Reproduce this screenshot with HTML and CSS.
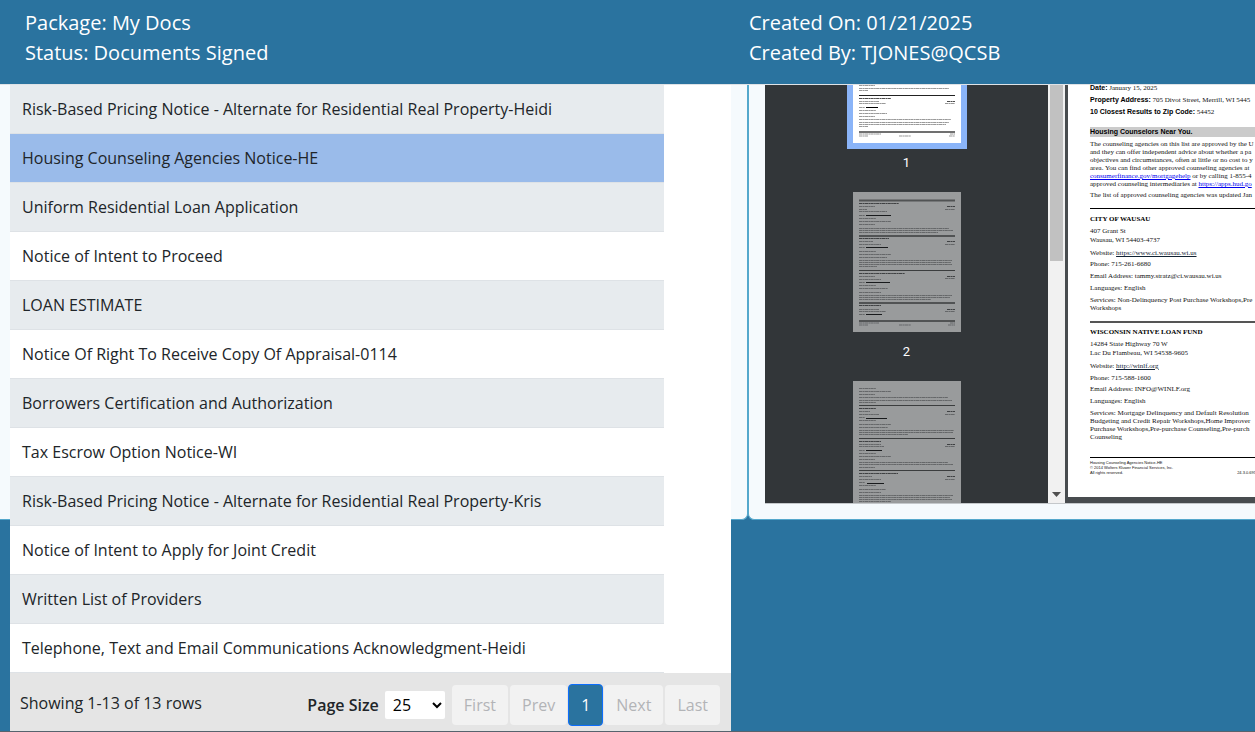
FILE: index.html
```html
<!DOCTYPE html>
<html lang="en">
<head>
<meta charset="utf-8">
<title>My Docs</title>
<link rel="stylesheet" href="styles.css">
</head>
<body>
<header class="summary">
  <div class="summary-col">
    <div>Package: My Docs</div>
    <div>Status: Documents Signed</div>
  </div>
  <div class="summary-col summary-col-created">
    <div>Created On: 01/21/2025</div>
    <div>Created By: TJONES@QCSB</div>
  </div>
</header>
<main class="panels">
  <section class="card card-list">
    <div class="doc-list">
      <div class="table-wrap">
        <table class="docs">
          <tbody>
            <tr><td>Risk-Based Pricing Notice - Alternate for Residential Real Property-Heidi</td></tr>
            <tr class="selected"><td>Housing Counseling Agencies Notice-HE</td></tr>
            <tr><td>Uniform Residential Loan Application</td></tr>
            <tr><td>Notice of Intent to Proceed</td></tr>
            <tr><td>LOAN ESTIMATE</td></tr>
            <tr><td>Notice Of Right To Receive Copy Of Appraisal-0114</td></tr>
            <tr><td>Borrowers Certification and Authorization</td></tr>
            <tr><td>Tax Escrow Option Notice-WI</td></tr>
            <tr><td>Risk-Based Pricing Notice - Alternate for Residential Real Property-Kris</td></tr>
            <tr><td>Notice of Intent to Apply for Joint Credit</td></tr>
            <tr><td>Written List of Providers</td></tr>
            <tr><td>Telephone, Text and Email Communications Acknowledgment-Heidi</td></tr>
          </tbody>
        </table>
      </div>
      <div class="pager">
        <span class="pager-info">Showing 1-13 of 13 rows</span>
        <label class="pager-label" for="page-size">Page Size</label>
        <select class="pager-size" id="page-size"><option>10</option><option selected>25</option><option>50</option></select>
        <nav class="pager-buttons" aria-label="Pages">
          <button type="button" disabled>First</button>
          <button type="button" disabled>Prev</button>
          <button type="button" class="current">1</button>
          <button type="button" disabled>Next</button>
          <button type="button" disabled>Last</button>
        </nav>
      </div>
    </div>
  </section>
  <section class="card card-viewer">
    <div class="viewer">
      <div class="thumbs">
        <div class="thumb active">
          <svg viewBox="0 0 108 140" width="108" height="140" aria-hidden="true">
            <path class="tx strong" d="M6 95.500H38M94 98.500H102"/>
            <path class="tx" d="M6 82.500H22M6 85.500H96M6 87.500H15M6 98.500H26M6 100.500H33M92 100.500H102M6 104.500H12M6 107.500H23M6 110.500H34M6 113.500H22M6 116.500H98M6 119.500H96M6 121.500H93M6 123.500H15"/>
            <path class="bar strong" d="M6 92.500H102"/>
            <path class="bar soft" d="M6 129H102"/>
            <path class="tx" d="M6 131H28M6 133H15M46 133H58M97 131H102M96 133H102"/>
            <path class="link" d="M13 104.500H25"/>
          </svg>
          <span>1</span>
        </div>
        <div class="thumb">
          <svg viewBox="0 0 108 140" width="108" height="140" aria-hidden="true">
            <path class="bar soft" d="M6 8.500H102M6 44H102M6 111H102M6 129H102"/>
            <path class="bar" d="M6 78.500H102"/>
            <path class="tx strong" d="M6 11.500H46M94 14.500H102M6 46.500H36M94 49.500H102M6 81.500H52M94 84.500H102M6 113.500H28M94 117.500H102"/>
            <path class="tx" d="M6 14.500H22M6 17.500H14M6 19.500H34M92 17.500H102M6 23.500H12M6 26.500H23M6 29.500H38M6 32.500H22M6 36.500H96M6 38.500H100M6 40.500H85"/>
            <path class="tx" d="M6 49.500H20M6 52.500H28M92 52.500H102M6 55.500H12M6 59.500H23M6 62.500H38M6 65.500H34M6 68.500H99M6 70.500H98M6 72.500H99M6 74.500H24"/>
            <path class="tx" d="M6 84.500H22M6 87.500H28M92 86.500H102M6 90.500H12M6 93.500H23M6 96.500H35M6 100.500H28M6 103.500H99M6 105.500H97M6 107.500H78"/>
            <path class="tx" d="M6 117.500H26M6 119.500H33M92 119.500H102M6 122.500H12M6 131H26M6 133H15M46 133H58M97 131H102M95 133H102"/>
            <path class="link" d="M13 23.500H38M13 55.500H35M13 90.500H37M13 122.500H29"/>
          </svg>
          <span>2</span>
        </div>
        <div class="thumb">
          <svg viewBox="0 0 108 140" width="108" height="140" aria-hidden="true">
            <path class="bar" d="M6 24.500H102M6 57.500H102M6 89.500H102"/>
            <path class="tx strong" d="M6 27.500H23M94 30.500H102M6 60.500H28M94 63.500H102M6 92.500H45M94 95.500H102"/>
            <path class="tx" d="M6 7.500H23M6 10.500H38M6 13.500H22M6 16.500H95M6 19.500H99M6 21.500H23"/>
            <path class="tx" d="M6 30.500H17M6 33.500H26M92 33.500H102M6 36.500H12M6 39.500H23M6 43.500H38M6 46.500H35M6 49.500H101M6 51.500H100M6 53.500H55"/>
            <path class="tx" d="M6 63.500H28M6 65.500H31M92 65.500H102M6 69.500H12M6 72.500H23M6 75.500H38M6 78.500H22M6 81.500H95M6 83.500H100M6 86.500H22"/>
            <path class="tx" d="M6 95.500H19M6 98.500H28M92 98.500H102M6 101.500H12M6 104.500H23M6 108.500H33M6 111.500H28M6 114.500H100M6 116.500H97M6 118.500H99M6 120.500H38"/>
            <path class="link" d="M13 37.500H34M13 69.500H29M14 102.500H31"/>
          </svg>
        </div>
      </div>
      <div class="scrollbar">
        <div class="scroll-thumb"></div>
        <svg viewBox="0 0 9 5" width="9" height="5" aria-hidden="true"><path d="M0 0H9L4.500 5Z" fill="#505050"/></svg>
      </div>
      <div class="page-area">
        <article class="page">
          <p class="fact"><b>Date:</b> January 15, 2025</p>
          <p class="fact"><b>Property Address:</b> 705 Divot Street, Merrill, WI 5445</p>
          <p class="fact"><b>10 Closest Results to Zip Code:</b> 54452</p>
          <h2 class="banner">Housing Counselors Near You.</h2>
          <p>The counseling agencies on this list are approved by the U<br>
          and they can offer independent advice about whether a pa<br>
          objectives and circumstances, often at little or no cost to y<br>
          area. You can find other approved counseling agencies at<br>
          <a href="#mortgagehelp">consumerfinance.gov/mortgagehelp</a> or by calling 1-855-4<br>
          approved counseling intermediaries at <a href="#hud">https://apps.hud.go</a></p>
          <p class="updated">The list of approved counseling agencies was updated Jan</p>
          <section class="agency">
            <h3>CITY OF WAUSAU</h3>
            <p class="address">407 Grant St<br>Wausau, WI 54403-4737</p>
            <p>Website: <a class="dark" href="#wausau">https://www.ci.wausau.wi.us</a></p>
            <p class="phone">Phone: 715-261-6680</p>
            <p>Email Address: tammy.stratz@ci.wausau.wi.us</p>
            <p>Languages: English</p>
            <p>Services: Non-Delinquency Post Purchase Workshops,Pre<br>Workshops</p>
          </section>
          <section class="agency agency-gray">
            <h3>WISCONSIN NATIVE LOAN FUND</h3>
            <p class="address">14284 State Highway 70 W<br>Lac Du Flambeau, WI 54538-9605</p>
            <p>Website: <a class="dark" href="#winlf">http://winlf.org</a></p>
            <p>Phone: 715-588-1600</p>
            <p class="email">Email Address: INFO@WINLF.org</p>
            <p>Languages: English</p>
            <p>Services: Mortgage Delinquency and Default Resolution<br>
            Budgeting and Credit Repair Workshops,Home Improver<br>
            Purchase Workshops,Pre-purchase Counseling,Pre-purch<br>
            Counseling</p>
          </section>
          <footer class="page-foot">
            <div>Housing Counseling Agencies Notice-HE<br>© 2014 Wolters Kluwer Financial Services, Inc.<br>All rights reserved.</div>
            <div class="version">24.3.0.695</div>
          </footer>
        </article>
      </div>
    </div>
  </section>
</main>
</body>
</html>
```
FILE: styles.css
```css
* { box-sizing: border-box; }

body {
  margin: 0;
  min-height: 100vh;
  overflow: hidden;
  background: #2a739f;
  border-bottom: 1px solid #56636d;
  color: #212529;
  font: 16px/24px "Open Sans", sans-serif;
}

.summary, .panels {
  display: grid;
  grid-template-columns: minmax(0, 748fr) minmax(0, 507fr);
}

.summary {
  padding: 8px 0 16px;
  color: #fff;
  font-size: 20px;
  line-height: 30px;
}
.summary-col { padding-left: 25px; }
.summary-col-created { padding-left: 1px; }

.panels { border-top: 1px solid #dee2e6; }

.card {
  background: #f5fafd;
  border: 1px solid #54a8cc;
  border-top: 0;
}
.card-list {
  height: 0;
  min-height: 100%;
  padding: 0 16px 0 10px;
  border-left: 0;
  border-bottom-right-radius: 6px;
}
.card-viewer {
  padding: 0 0 15px 16px;
  border-right: 0;
  border-bottom-left-radius: 6px;
}

/* Document list */
.doc-list { background: #fff; }
.table-wrap { padding-right: 67px; }
.docs { width: 100%; border-collapse: separate; border-spacing: 0; }
.docs td { padding: 12px; border-bottom: 1px solid #dee2e6; }
.docs tr:nth-child(odd) { background: #e7ebee; }
.docs tr.selected { background: #9abbea; }

.pager {
  display: flex;
  align-items: center;
  padding: 11px 11px 5px 10px;
  background: #e5e5e5;
}
.pager-info { margin-right: auto; padding-bottom: 4px; }
.pager-label { margin-right: 6px; font-weight: 600; }
.pager-size {
  width: 60px;
  height: 28px;
  margin-right: 7px;
  padding: 0 4px;
  border: 0;
  border-radius: 2px;
  background: #fff;
  color: #000;
  font: inherit;
}
.pager-buttons { display: flex; align-items: center; gap: 2px; }
.pager-buttons button {
  height: 40px;
  padding: 0 12px;
  border: 0;
  border-radius: 4px;
  background: #f2f2f2;
  color: #b2b4b7;
  font: inherit;
}
.pager-buttons .current {
  height: 42px;
  margin: 0 -1px;
  border: 1px solid #0d6efd;
  background: #2a739f;
  color: #fff;
}

/* PDF viewer */
.viewer {
  display: grid;
  grid-template-columns: 283px 17px minmax(0, 1fr);
  height: 419px;
  overflow: hidden;
  border-bottom: 1px solid #c4c8cb;
}
.thumbs {
  display: flex;
  flex-direction: column;
  align-items: center;
  min-height: 0;
  margin-top: -82px;
  background: #323639;
}
.thumb {
  flex: none;
  color: #fff;
  font: 13px/40px Roboto, sans-serif;
  text-align: center;
}
.thumb svg { display: block; background: #fff; opacity: .5; }
.thumb span { display: block; padding-bottom: 9px; }
.thumb.active svg { opacity: 1; outline: 6px solid #8ab4f8; }
.tx { fill: none; stroke: #333; stroke-width: 1; stroke-dasharray: 3.3 .4 1.7 .3; opacity: .5; }
.tx.strong { stroke: #111; opacity: .75; }
.bar { stroke: #444; stroke-width: 1; }
.bar.strong { stroke: #222; }
.bar.soft { stroke: #707070; stroke-width: 2; }
.link { stroke: #000; stroke-width: 1; }

.scrollbar {
  display: flex;
  flex-direction: column;
  align-items: center;
  justify-content: space-between;
  padding-bottom: 6px;
  background: #f1f1f1;
}
.scroll-thumb { width: 13px; height: 176px; background: #c1c1c1; }

.page-area {
  overflow: hidden;
  padding: 0 0 6px 3px;
  background: #484c4f;
}
.page {
  height: 100%;
  padding-left: 22px;
  overflow: hidden;
  background: #fff;
  color: #111;
  font: 7px/8px "Liberation Serif", serif;
  white-space: nowrap;
}
.page p { margin: 4px 0 0; }
.page .fact:first-child { margin-top: -1px; }
.fact b { color: #000; font-family: "Liberation Sans", sans-serif; }
.page a { color: #0000ee; }
.page a.dark { color: #123; }
.banner {
  margin: 11px 0 0;
  background: #cbcbcb;
  color: #000;
  font: bold 7px/10px "Liberation Sans", sans-serif;
}
.banner + p, .page .updated, .page .phone, .page .email { margin-top: 3px; }
.agency {
  margin-top: 9px;
  padding-top: 6px;
  border-top: 1px solid #000;
}
.agency-gray { padding-top: 5px; border-top: 2px solid #555; }
.agency h3 { margin: 0; color: #000; font-size: 7px; line-height: 8px; }
.page .address { line-height: 9px; }
.page-foot {
  display: flex;
  gap: 64px;
  align-items: flex-end;
  margin-top: 16px;
  padding-top: 2px;
  border-top: 1px solid #000;
  font: 4px/5px "Liberation Sans", sans-serif;
}
```
